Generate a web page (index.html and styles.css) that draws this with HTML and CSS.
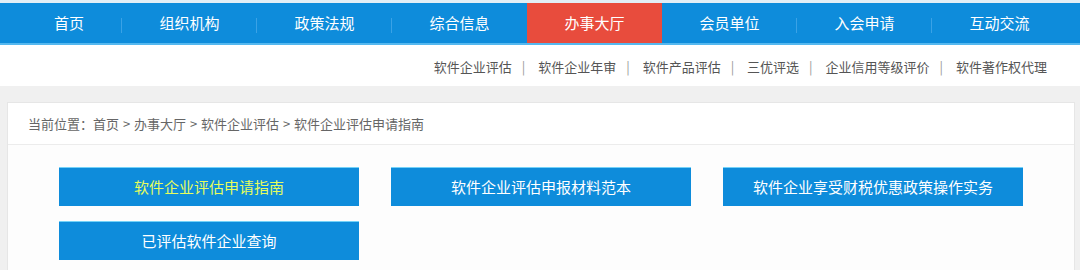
FILE: index.html
```html
<!DOCTYPE html>
<html lang="zh-CN">
<head>
  <meta charset="UTF-8">
  <title>软件企业评估申请指南</title>
  <link rel="stylesheet" href="styles.css">
</head>
<body>
  <!-- 主导航 -->
  <div class="topnav">
    <a class="nav-item first" href="#">首页</a>
    <a class="nav-item" href="#">组织机构</a>
    <a class="nav-item" href="#">政策法规</a>
    <a class="nav-item before-active" href="#">综合信息</a>
    <a class="nav-item active" href="#">办事大厅</a>
    <a class="nav-item" href="#">会员单位</a>
    <a class="nav-item" href="#">入会申请</a>
    <a class="nav-item last" href="#">互动交流</a>
  </div>

  <!-- 子导航 -->
  <div class="subnav">
    <a href="#">软件企业评估</a><span class="sep">|</span>
    <a href="#">软件企业年审</a><span class="sep">|</span>
    <a href="#">软件产品评估</a><span class="sep">|</span>
    <a href="#">三优评选</a><span class="sep">|</span>
    <a href="#">企业信用等级评价</a><span class="sep">|</span>
    <a href="#">软件著作权代理</a>
  </div>

  <div class="main">
    <div class="box">
      <div class="crumbs">当前位置：首页 &gt; 办事大厅 &gt; 软件企业评估 &gt; 软件企业评估申请指南</div>
      <div class="buttons">
        <a class="btn current" href="#">软件企业评估申请指南</a>
        <a class="btn" href="#">软件企业评估申报材料范本</a>
        <a class="btn" href="#">软件企业享受财税优惠政策操作实务</a>
        <a class="btn" href="#">已评估软件企业查询</a>
      </div>
    </div>
  </div>
</body>
</html>
```

FILE: styles.css
```css
body {
  margin: 0;
  background-color: #f0f0f0;
  font-family: "Noto Sans CJK SC", "Liberation Sans", sans-serif;
}

a {
  text-decoration: none;
}

.topnav {
  display: flex;
  height: 40px;
  background-color: #0e8cdb;
  border-top: 3px solid #e2eef6;
  border-bottom: 2px solid #55b8ef;
}

.nav-item {
  position: relative;
  width: 135px;
  line-height: 40px;
  text-align: center;
  color: #fff;
  font-size: 15px;
}

.nav-item.first {
  width: 106px;
  padding-left: 16px;
}

/* petit séparateur vertical */
.nav-item::after {
  content: "";
  position: absolute;
  right: 0;
  top: 15px;
  height: 15px;
  border-right: 1px solid #3aa2e6;
}

.nav-item.last::after,
.nav-item.active::after,
.nav-item.before-active::after {
  display: none;
}

.nav-item.active {
  background-color: #e84c3d;
}

.subnav {
  height: 41px;
  line-height: 43px;
  background-color: #fff;
  text-align: right;
  padding-right: 33px;
  font-size: 13px;
}

.subnav a {
  color: #555;
}

.subnav .sep {
  color: #999;
  margin: 0 10px;
}

.main {
  padding: 16px 5px 0 7px;
}

.box {
  background-color: #fdfdfd;
  border: 1px solid #e6e6e6;
  border-bottom: none;
  height: 168px;
}

.crumbs {
  height: 41px;
  line-height: 42px;
  padding-left: 20px;
  font-size: 13px;
  word-spacing: 1px;
  color: #666;
  background-color: #fff;
  border-bottom: 1px solid #ececec;
}

.buttons {
  display: grid;
  grid-template-columns: repeat(3, 300px);
  gap: 15px 32px;
  padding: 22px 0 0 51px;
}

.btn {
  height: 38px;
  line-height: 38px;
  text-align: center;
  background-color: #0e8cdb;
  border-top: 1px solid #74d2f8;
  color: #fff;
  font-size: 15px;
}

.btn.current {
  color: #e6fd5c;
}
```
